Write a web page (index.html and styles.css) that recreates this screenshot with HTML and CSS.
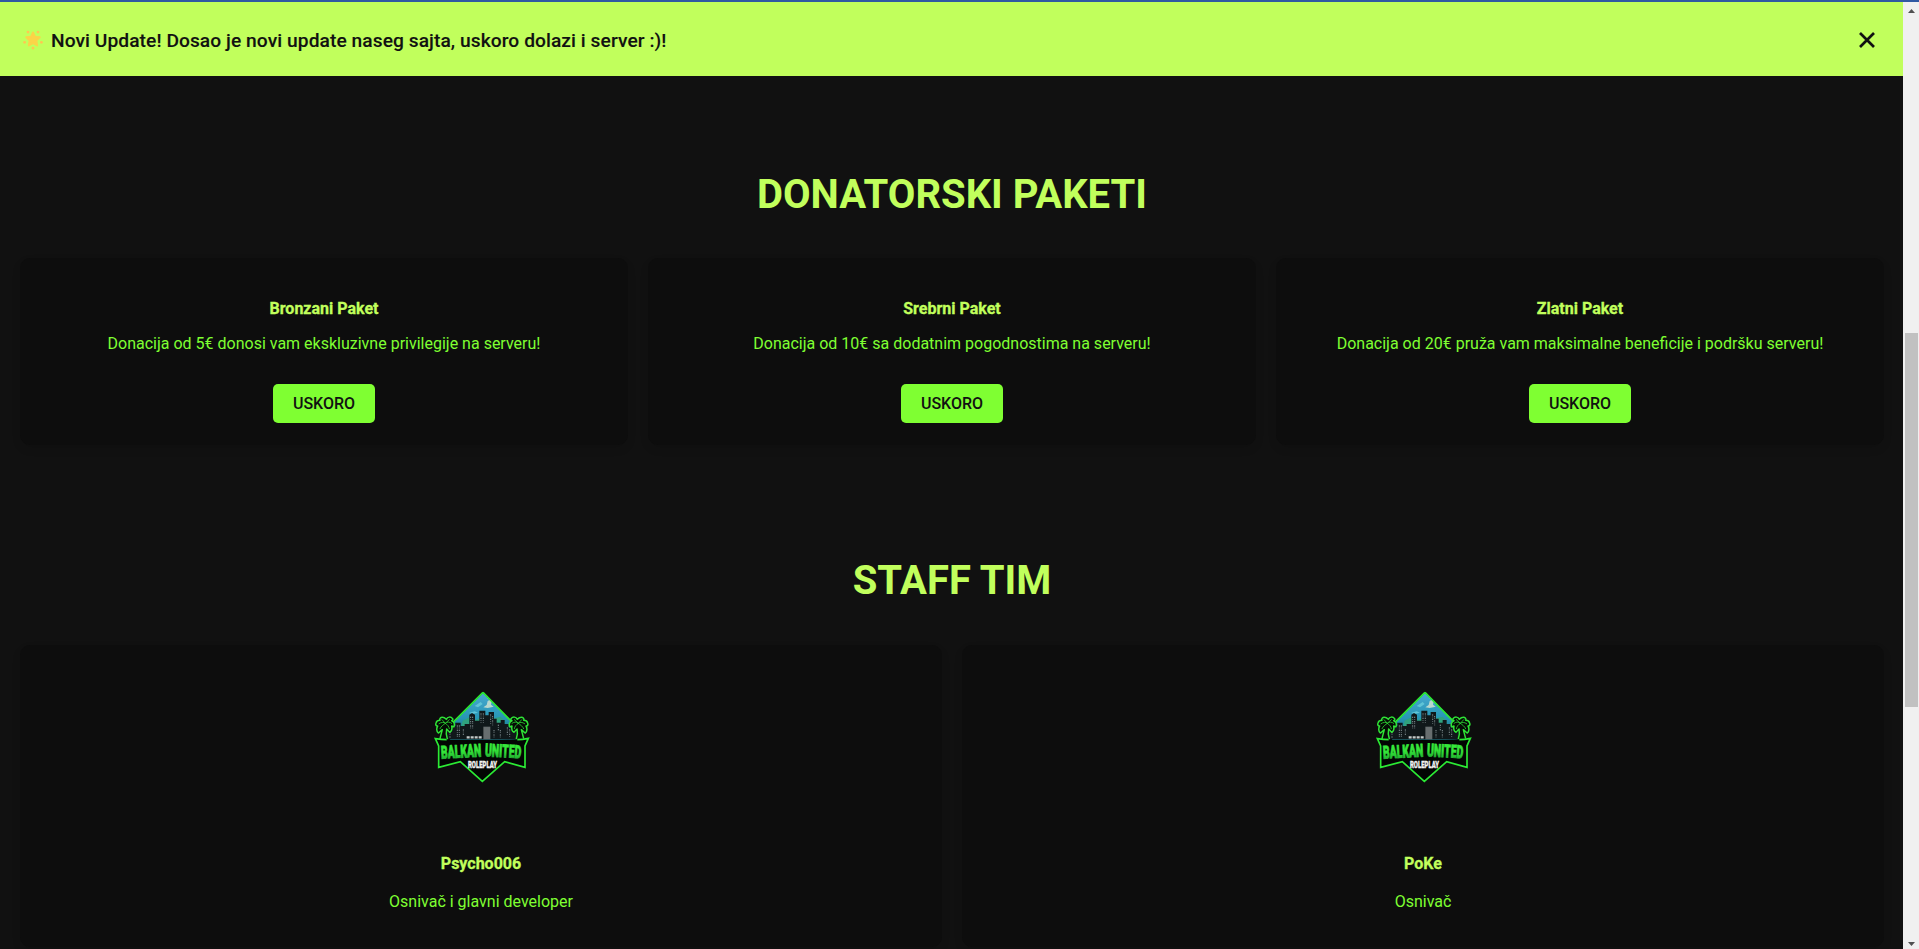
FILE: index.html
```html
<!DOCTYPE html>
<html lang="sr">
<head>
<meta charset="utf-8">
<title>Balkan United Roleplay</title>
<link rel="stylesheet" href="styles.css">
</head>
<body>
<svg class="defs" width="0" height="0">
  <defs>
    <linearGradient id="sky" x1="0" y1="0" x2="0" y2="1"><stop offset="0" stop-color="#4cabd4"/><stop offset=".55" stop-color="#2796b4"/><stop offset="1" stop-color="#155b66"/></linearGradient>
    <linearGradient id="word" x1="0" y1="0" x2="0" y2="1"><stop offset=".5" stop-color="#35e63a"/><stop offset="1" stop-color="#17982c"/></linearGradient>
    <g id="palm" stroke-linecap="round" stroke-linejoin="round">
      <path fill="#050c05" stroke="#2fe336" stroke-width="4.5" d="M60 176C63 164 65 156 67 149C62 152 60 157 55 159C49 154 49 144 53 138C48 139 46 133 48 129C50 122 56 121 60 121C57 116 62 112 67 112C73 112 76 115 79 118C83 110 92 109 98 116C100 119 97 121 95 122C102 124 105 132 102 140C99 141 97 139 95 138C97 146 94 154 89 157C85 153 83 149 80 147C78 156 78 166 82 176"/>
      <path fill="none" stroke="#2bd032" stroke-width="2.5" d="M57 131C64 126 72 126 76 130C81 125 89 125 95 130M76 130C70 134 63 139 60 146M76 130C82 134 87 139 88 146M66 119L76 130L88 119"/>
    </g>
    <symbol id="logo" viewBox="0 0 360 330">
      <clipPath id="peak"><path d="M189 38L90 138V180H290V138Z"/></clipPath>
      <g clip-path="url(#peak)">
        <path fill="url(#sky)" d="M80 30H300V185H80Z"/>
        <path fill="#b8d8cf" d="M190 82l10-7 3-12 6-3 6 4-2 10 8 6-18 4z"/>
        <path fill="#5fc4d6" d="M164 78l18-12 6 6-14 10zM148 98l16-4 10 4-18 4zM200 54l8-4-2 8z"/>
        <path fill="#2fa27e" d="M128 122l20-10 22 8 14-9 28 7 30-8 12 12v30H120z"/>
      </g>
      <path fill="#10181a" d="M82 178V148H94V138H106V128H122V138H134V132H148V104L156 99 165 104V122H178V92H196V106H206V96H222V116H230V128H242V120H254V132H266V142H280V150H294V178Z"/>
      <path d="M112 136v38M118 136v38M152 110v36M158 110v36M183 100v28M190 100v28M212 103v28M218 108v28M235 134v20M262 142v24M269 148v22M90 156v18M130 148v20M222 150v22M241 150v22" stroke="#839093" stroke-width="3" stroke-dasharray="4 3 2 4" fill="none"/>
      <path d="M140 172h48" stroke="#c5cbca" stroke-width="7" stroke-dasharray="9 3"/>
      <path fill="#62696a" d="M190 140h21v38h-21z"/>
      <path d="M195 142v34M201 142v34M207 142v34" stroke="#858b8b"/>
      <path d="M189 37L96 130M189 37L278 128" fill="none" stroke="#2be832" stroke-width="5"/>
      <use href="#palm"/><use href="#palm" transform="translate(371 0) scale(-1 1)"/>
      <path d="M46 176Q117 183 186 180Q256 183 325 175L315 198V262L254 245L187 304L121 245L56 262V198Z" fill="#020503"/>
      <path d="M80 179Q64 179 46 176L56 198V262L121 245L187 304L254 245L315 262V198L325 175Q308 179 292 179" fill="none" stroke="#2bea34" stroke-width="5"/>
      <text x="64" y="236" textLength="121" lengthAdjust="spacingAndGlyphs" class="logo-word" transform="rotate(-3 64 236)">BALKAN</text>
      <text x="194" y="229" textLength="109" lengthAdjust="spacingAndGlyphs" class="logo-word" transform="rotate(3 194 229)">UNITED</text>
      <text x="144" y="263" textLength="87" lengthAdjust="spacingAndGlyphs" class="logo-role">ROLEPLAY</text>
    </symbol>
  </defs>
</svg>
<div class="window-edge"></div>
<div class="viewport">
  <div class="page">
    <header class="banner">
      <svg class="star" viewBox="0 0 20 20"><path fill="#fbd448" stroke="#fbd448" stroke-width="2" stroke-linejoin="round" d="M10 2.5l2 4.3 4.7.5-3.4 3.3.9 4.8L10 13.2l-4.2 2.2.9-4.8-3.4-3.3L8 6.8z"/><g fill="#ffc850"><circle cx="5" cy="2.1" r="1.4"/><circle cx="15" cy="2.1" r="1.4"/><circle cx="1.6" cy="12.3" r="1.4"/><circle cx="18.4" cy="12.3" r="1.4"/><circle cx="10" cy="18" r="1.5"/></g></svg>
      <p class="banner-text">Novi Update! Dosao je novi update naseg sajta, uskoro dolazi i server :)!</p>
      <svg class="close" viewBox="0 0 18 18"><path d="M2 2L16 16M16 2L2 16" stroke="#111" stroke-width="2.7"/></svg>
    </header>
    <section class="section packages">
      <h2 class="title">DONATORSKI PAKETI</h2>
      <div class="grid grid-3">
        <article class="card"><h3>Bronzani Paket</h3><p>Donacija od 5€ donosi vam ekskluzivne privilegije na serveru!</p><button class="btn">USKORO</button></article>
        <article class="card"><h3>Srebrni Paket</h3><p>Donacija od 10€ sa dodatnim pogodnostima na serveru!</p><button class="btn">USKORO</button></article>
        <article class="card"><h3>Zlatni Paket</h3><p>Donacija od 20€ pruža vam maksimalne beneficije i podršku serveru!</p><button class="btn">USKORO</button></article>
      </div>
    </section>
    <section class="section staff">
      <h2 class="title">STAFF TIM</h2>
      <div class="grid grid-2">
        <article class="card member"><svg class="logo"><use href="#logo"/></svg><h3>Psycho006</h3><p>Osnivač i glavni developer</p></article>
        <article class="card member"><svg class="logo"><use href="#logo"/></svg><h3>PoKe</h3><p>Osnivač</p></article>
      </div>
    </section>
  </div>
  <div class="scrollbar">
    <svg class="arrow" viewBox="0 0 7 4"><path fill="#505050" d="M0 4L3.5 0 7 4z"/></svg>
    <div class="track"><div class="thumb"></div></div>
    <svg class="arrow" viewBox="0 0 7 4"><path fill="#505050" d="M0 0L3.5 4 7 0z"/></svg>
  </div>
</div>
</body>
</html>
```
FILE: styles.css
```css
* { box-sizing: border-box; }
body { margin: 0; height: 949px; overflow: hidden; background: #111; font-family: Roboto, sans-serif; font-size: 16px; }
h2, h3, p { margin: 0; }
.defs { position: absolute; }
.window-edge { height: 2px; background: #3059a3; }
.viewport { display: flex; height: 947px; }
.page { flex: 1; overflow: hidden; }
.banner { height: 74px; padding: 0 27px 0 23px; display: flex; align-items: center; background: #c1ff5c; color: #111; }
.star { width: 20px; height: 20px; margin-top: 1px; }
.banner-text { flex: 1; margin-left: 8px; font-size: 19.2px; font-weight: 500; letter-spacing: .065px; line-height: 30px; margin-top: 3px; -webkit-text-stroke: .1px #111; }
.close { width: 18px; height: 18px; margin-top: 2px; }
.section { padding: 0 19px 0 20px; }
.packages { padding-top: 94px; }
.staff { padding-top: 112px; }
.title { height: 88px; padding-top: 1px; line-height: 47px; font-size: 40px; font-weight: 700; text-align: center; color: #c1ff5c; }
.staff .title { padding-top: 0; }
.grid { display: grid; gap: 20px; }
.grid-3 { grid-template-columns: repeat(3, 1fr); }
.grid-2 { grid-template-columns: repeat(2, 1fr); }
.card { height: 187px; padding-top: 41px; display: flex; flex-direction: column; align-items: center; border-radius: 10px; background: #0d0d0d; box-shadow: 0 4px 8px rgba(0, 0, 0, .1); color: #7fff32; }
.card h3 { font-size: 16px; line-height: 20px; color: #c1ff5c; -webkit-text-stroke: .3px #c1ff5c; }
.card p { margin-top: 15px; line-height: 20px; }
.btn { width: 102px; height: 39px; margin-top: 30px; padding: 0; border: 0; border-radius: 5px; background: #7fff32; color: #111; font: 500 16px Roboto, sans-serif; }
.member { height: 302px; padding-top: 35px; }
.logo { width: 120px; height: 110px; margin-left: -2px; }
.member h3 { margin-top: 64px; }
.member p { margin-top: 18px; }
.logo-word { font: 900 54px Roboto, sans-serif; fill: url(#word); stroke: url(#word); stroke-width: 2.5px; }
.logo-role { font: 900 29px Roboto, sans-serif; fill: #f2f2f2; stroke: #f2f2f2; stroke-width: 1px; }
.scrollbar { width: 16px; padding: 7px 0 3px; display: flex; flex-direction: column; align-items: center; background: #f0f0f0; }
.arrow { width: 7px; height: 4px; }
.track { flex: 1; width: 13px; padding-top: 320px; }
.thumb { height: 374px; background: #c1c1c1; }
```
